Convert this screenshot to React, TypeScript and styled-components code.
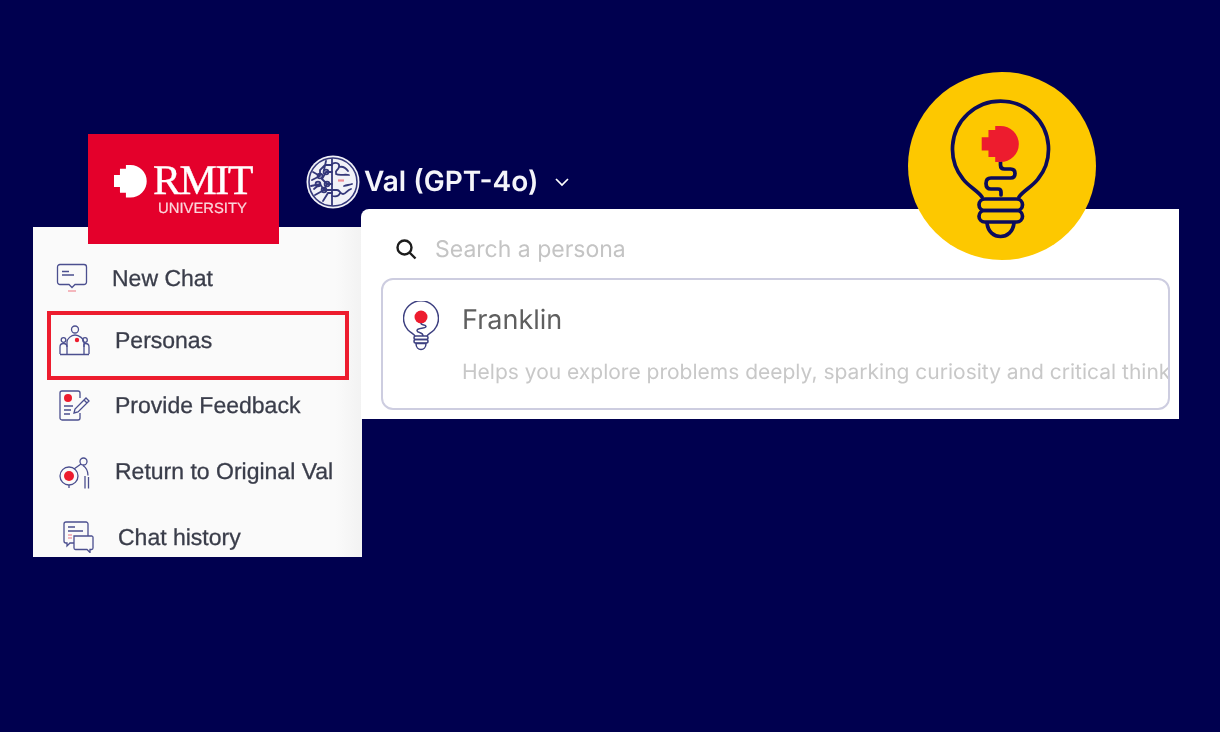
import React from "react";
import styled, { createGlobalStyle, css } from "styled-components";

const INK = "#4b4f8f";
const RED = "#ed1c2e";
const NAVY = "#00004f";

const menuItems = [
  { label: "New Chat", inset: 23, top: 0, icon: "chat" },
  { label: "Personas", inset: 26, top: 12, icon: "people", selected: true },
  { label: "Provide Feedback", inset: 26, top: 15, icon: "feedback" },
  { label: "Return to Original Val", inset: 26, top: 16, icon: "target" },
  { label: "Chat history", inset: 30, top: 16, icon: "history" },
];

// the stepped-left dot of the logo, 36 units square
const STEP_DOT = "M18 0A17.700 17.700 0 0 1 18 35.400H13V30.400H6.500V24H0V11H6.500V4H13V0Z";

const BrainIcon = () => (
  <svg width="54" height="54" viewBox="0 0 54 54" fill="none">
    <circle cx="27" cy="27" r="26.500" fill="#f1f1f8" />
    <circle cx="27" cy="27" r="24" stroke="#34377a" strokeWidth="1.600" />
    <g stroke="#34377a" strokeWidth="1.800" strokeLinecap="round">
      <path d="M26 4v46" />
      <path d="M26 10h-7l-5 5v6l-8 4M26 17h-6l-4 7 5 5h5M5 31l9-2 4 6h8M9 40l9-5M17 46l5-8h4M20 6l-2 9M7 17l7 4M14 29l-6 5M21 29l-3 6" />
      <circle cx="14" cy="21" r="2.400" />
      <circle cx="21" cy="29" r="2.400" />
      <circle cx="18" cy="35" r="2.400" />
      <circle cx="20" cy="17" r="2.400" />
      <circle cx="12" cy="29" r="2.400" />
      <path d="M26 9c4-2 8-1 7 3s-4 3-3 6M33 12c4-1 7 1 9 4M30 19c3 2 9 0 13 1M26 35h5c3 0 3 4 6 4s4-4 8-5M34 38c-1 3-4 4-8 3M38 31c3-1 5-1 8-2" />
    </g>
    <path d="M32 25.500h6" stroke="#ee8a94" strokeWidth="2.200" />
  </svg>
);

const MenuIcon = ({ kind }: { kind: string }) => {
  if (kind === "chat") {
    return (
      <svg width="32" height="30" viewBox="0 0 32 30" fill="none" stroke={INK} strokeWidth="1.300">
        <path d="M4 1.500h24a2.500 2.500 0 0 1 2.500 2.500v15a2.500 2.500 0 0 1-2.500 2.500H19l-3 3-3-3H4A2.500 2.500 0 0 1 1.500 19V4A2.500 2.500 0 0 1 4 1.500z" />
        <path d="M6 8.500h7M6 12h12" />
        <path d="M12 28h8" stroke="#f2a0a8" strokeWidth="1.500" />
      </svg>
    );
  }
  if (kind === "people") {
    return (
      <svg width="32" height="31" viewBox="0 0 32 31" fill="none" stroke={INK} strokeWidth="1.300">
        <circle cx="16" cy="4.500" r="3.500" />
        <circle cx="4.500" cy="15" r="2.300" />
        <circle cx="26" cy="15" r="2.300" />
        <path d="M8 29V17c0-3 4-7 8-7s9 4 9 7v12" />
        <path d="M1 29v-7c0-2 1.500-3.500 3.500-3.500S8 20 8 22M30 29v-7c0-2-1.500-3.500-3.500-3.500S25 20 25 22M1 29.500h29" />
        <circle cx="18" cy="15" r="2.200" fill={RED} stroke="none" />
      </svg>
    );
  }
  if (kind === "feedback") {
    return (
      <svg width="32" height="31" viewBox="0 0 32 31" fill="none" stroke={INK} strokeWidth="1.300">
        <path d="M21 23v5a2 2 0 0 1-2 2H3a2 2 0 0 1-2-2V3a2 2 0 0 1 2-2h16a2 2 0 0 1 2 2v5" />
        <circle cx="9" cy="8" r="4" fill={RED} stroke="none" />
        <path d="M5 16h9M5 20h7M5 24h6" />
        <path d="M15 23l1-4 11-11 3 3-11 11zM25 10l3 3" />
      </svg>
    );
  }
  if (kind === "target") {
    return (
      <svg width="32" height="35" viewBox="0 0 32 35" fill="none" stroke={INK} strokeWidth="1.300">
        <circle cx="24.500" cy="7.500" r="3.500" />
        <circle cx="10" cy="22" r="9" />
        <path d="M10 31v3" />
        <circle cx="10" cy="22" r="5" fill={RED} stroke="none" />
        <path d="M22 10l-7 5M24 11.500c3 2 5 6 5 10M26 22v12.500M29.500 23v11.500" />
      </svg>
    );
  }
  return (
    <svg width="31" height="32" viewBox="0 0 31 32" fill="none" stroke={INK} strokeWidth="1.300">
      <path d="M25 15V3a2 2 0 0 0-2-2H3a2 2 0 0 0-2 2v17a2 2 0 0 0 2 2h1v3l3-3h4" />
      <path d="M11 15h18a1.500 1.500 0 0 1 1 1.500V27a1.500 1.500 0 0 1-1.500 1.500H27v3l-3-3H12.500A1.500 1.500 0 0 1 11 27z" />
      <path d="M5 6h7M5 10h15" />
      <path d="M5 14h4M5 17h4" stroke="#f2a0a8" />
    </svg>
  );
};

const SmallBulb = () => (
  <svg width="36" height="50" viewBox="0 0 36 50" fill="none" stroke="#3d4080" strokeWidth="1.500">
    <path d="M12 35c-1-2-4-3-7-6a17.500 17.500 0 1 1 26 0c-3 3-6 4-7 6" />
    <circle cx="18" cy="16" r="6.500" fill={RED} stroke="none" />
    <path d="M18 22c0 3 5 1 5 3.500s-9 1-9 4 6 1 6 5.500" />
    <rect x="11" y="35" width="14" height="3.500" rx="1.750" />
    <rect x="11" y="38.500" width="14" height="3.500" rx="1.750" />
    <path d="M13 42.500c0 8 10 8 10 0z" />
  </svg>
);

const BigBulb = () => (
  <svg width="188" height="188" viewBox="0 0 188 188" fill="none">
    <circle cx="94" cy="94" r="94" fill="#fdc800" />
    <g stroke="#0b0b5c" strokeWidth="3.700" strokeLinecap="round" strokeLinejoin="round">
      <path d="M74 125C70 119 60 114 55 107A48 48 0 1 1 130 107C125 114 115 119 111 125" />
      <path d="M92.500 90v3q0 4 4 4h6q4.500 0 4.500 4.500t-4.500 4.500H83q-5 0-5 5.500t5 5.500h7q3 0 3 3v3" />
      <rect x="71" y="127" width="43.500" height="11.500" rx="5.750" />
      <rect x="71" y="138.500" width="43.500" height="11.500" rx="5.750" />
      <path d="M79 151c1 9 7 13.500 13.500 13.500S105 160 106 151" />
    </g>
    <path transform="translate(73.700 54) scale(1.040 1.020)" d={STEP_DOT} fill={RED} />
  </svg>
);

export default function App() {
  return (
    <Page>
      <GlobalStyle />
      <Collage>
        <Header>
          <Logo>
            <svg width="33" height="33" viewBox="0 0 36 36">
              <path d={STEP_DOT} fill="#ffffff" />
            </svg>
            <Wordmark>
              <Rmit>RMIT</Rmit>
              <University>UNIVERSITY</University>
            </Wordmark>
          </Logo>
          <ModelPicker>
            <BrainIcon />
            <ModelName>Val (GPT-4o)</ModelName>
            <svg width="16" height="10" viewBox="0 0 16 10" fill="none" stroke="#ffffff" strokeWidth="1.700">
              <path d="M2 2l6 6 6-6" />
            </svg>
          </ModelPicker>
        </Header>
        <Sidebar>
          {menuItems.map((item) => (
            <MenuRow key={item.label} $inset={item.inset} $top={item.top} $selected={item.selected}>
              <MenuIcon kind={item.icon} />
              <MenuLabel>{item.label}</MenuLabel>
            </MenuRow>
          ))}
        </Sidebar>
        <PersonaPanel>
          <SearchRow>
            <svg width="22" height="22" viewBox="0 0 22 22" fill="none" stroke="#1c1c1c" strokeWidth="2.400">
              <circle cx="9.500" cy="9.500" r="7" />
              <path d="M14.500 14.500l6 6" />
            </svg>
            <SearchHint>Search a persona</SearchHint>
          </SearchRow>
          <PersonaCard>
            <SmallBulb />
            <PersonaText>
              <PersonaName>Franklin</PersonaName>
              <PersonaBlurb>
                Helps you explore problems deeply, sparking curiosity and critical thinking
              </PersonaBlurb>
            </PersonaText>
          </PersonaCard>
        </PersonaPanel>
      </Collage>
      <Badge>
        <BigBulb />
      </Badge>
    </Page>
  );
}

// the reference is an upscaled capture, its small parts are a little soft
const soft = css`
  filter: blur(0.45px);
`;

const GlobalStyle = createGlobalStyle`
  body {
    margin: 0;
    background: ${NAVY};
    font-family: "Liberation Sans", Arial, sans-serif;
    text-rendering: geometricPrecision;
  }
`;

const Page = styled.div`
  position: relative;
  height: 732px;
  box-sizing: border-box;
  padding: 134px 0 0 33px;
  background: ${NAVY};
  overflow: hidden;
`;

const Collage = styled.div`
  display: grid;
  grid-template-columns: 328px 818px;
  grid-template-rows: 75px auto;
  align-items: start;
`;

const Header = styled.div`
  grid-column: 1 / -1;
  display: flex;
  align-items: flex-start;
  gap: 27px;
  height: 75px;
  padding-left: 55px;
`;

const Logo = styled.div`
  position: relative;
  z-index: 2;
  flex: none;
  display: flex;
  gap: 6px;
  box-sizing: border-box;
  width: 191px;
  height: 110px;
  padding: 31px 0 0 26px;
  background: #e4002b;
  color: #ffffff;
`;

const Wordmark = styled.div`
  display: flex;
  flex-direction: column;
  align-items: center;
  ${soft}
`;

const Rmit = styled.div`
  font-family: "Liberation Serif", "Times New Roman", serif;
  font-size: 42px;
  line-height: 32px;
  letter-spacing: -1.500px;
  -webkit-text-stroke: 0.4px #ffffff;
`;

const University = styled.div`
  margin-top: 5px;
  font-size: 14.800px;
  line-height: 14px;
  color: #fbd5db;
  -webkit-text-stroke: 0.2px #fbd5db;
`;

const ModelPicker = styled.div`
  display: flex;
  align-items: center;
  margin-top: 21px;
  height: 54px;
  ${soft}
`;

const ModelName = styled.span`
  margin: 0 16px 2px 4px;
  font-family: Inter, sans-serif;
  font-size: 28px;
  font-weight: 600;
  color: #f4f4fa;
  white-space: nowrap;
`;

const Sidebar = styled.nav`
  display: flex;
  flex-direction: column;
  box-sizing: border-box;
  width: 329px;
  height: 330px;
  margin-top: 18px;
  padding-top: 26px;
  background: linear-gradient(90deg, #fafafa 92%, #f2f2f2);
  overflow: hidden;
`;

const MenuRow = styled.a<{ $inset: number; $top: number; $selected?: boolean }>`
  position: relative;
  flex: none;
  display: flex;
  align-items: center;
  gap: 24px;
  height: 50px;
  margin-top: ${(p) => p.$top}px;
  padding-left: ${(p) => p.$inset}px;
  ${soft}

  ${(p) =>
    p.$selected &&
    `
    &::after {
      content: "";
      position: absolute;
      top: -4px;
      left: 14px;
      width: 302px;
      height: 69px;
      box-sizing: border-box;
      border: 4.500px solid ${RED};
    }
  `}
`;

const MenuLabel = styled.span`
  font-size: 23px;
  color: #3a3d4a;
  -webkit-text-stroke: 0.3px #3a3d4a;
  white-space: nowrap;
`;

const PersonaPanel = styled.section`
  position: relative;
  z-index: 1;
  box-sizing: border-box;
  width: 818px;
  height: 210px;
  padding: 0 9px 0 20px;
  background: #ffffff;
  border-top-left-radius: 8px;
`;

const SearchRow = styled.div`
  display: flex;
  align-items: center;
  gap: 18px;
  height: 69px;
  padding: 10px 0 0 14px;
  box-sizing: border-box;
  ${soft}
`;

const SearchHint = styled.span`
  font-family: Inter, sans-serif;
  font-size: 23px;
  color: #c4c4c4;
`;

const PersonaCard = styled.article`
  display: flex;
  gap: 23px;
  box-sizing: border-box;
  height: 132px;
  padding: 21px 0 0 20px;
  border: 2px solid #cdcde0;
  border-radius: 12px;
  overflow: hidden;
`;

const PersonaText = styled.div`
  min-width: 0;
  flex: 1;
  ${soft}
`;

const PersonaName = styled.div`
  font-family: Inter, sans-serif;
  font-size: 27px;
  line-height: 38px;
  color: #5f5f5f;
`;

const PersonaBlurb = styled.div`
  margin-top: 19px;
  font-family: Inter, sans-serif;
  font-size: 21px;
  line-height: 30px;
  color: #c8c8c8;
  white-space: nowrap;
`;

const Badge = styled.div`
  position: absolute;
  top: 72px;
  left: 908px;
  z-index: 3;
  width: 188px;
  height: 188px;
`;
